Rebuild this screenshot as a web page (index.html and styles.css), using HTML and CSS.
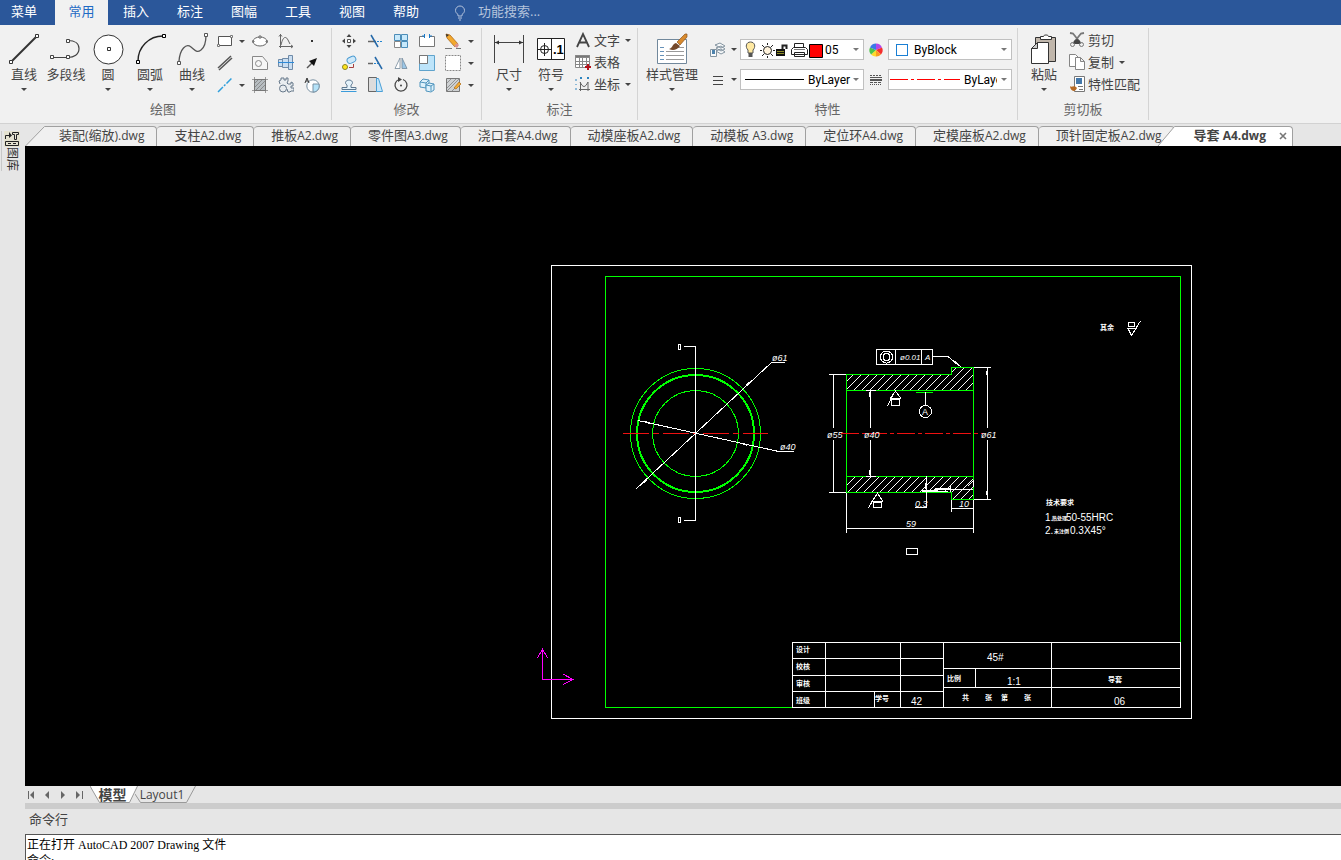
FILE: index.html
```
<!DOCTYPE html>
<html lang="zh-CN">

<head>
    <meta charset="UTF-8">
    <meta name="viewport" content="width=device-width, initial-scale=1.0">
    <title>导套 A4.dwg</title>
    <link rel="stylesheet" href="styles.css">
</head>

<body>
    <nav class="menu">
        <button class="first">菜单</button>
        <button class="active">常用</button>
        <button>插入</button>
        <button>标注</button>
        <button>图幅</button>
        <button>工具</button>
        <button>视图</button>
        <button>帮助</button>
        <label class="search">
            <svg width="12" height="16" viewBox="0 0 12 16" fill="none" stroke="#b4c3dc"><path d="M4 11V9.500C2.500 8.500 1.500 7 1.500 5.500a4.500 4.500 0 0 1 9 0c0 1.500-1 3-2.500 4V11zM4 13h4M5 15h2"/></svg>
            <input type="text" placeholder="功能搜索..." aria-label="功能搜索">
        </label>
    </nav>

    <div class="ribbon">
        <!-- 绘图 -->
        <section class="group draw">
            <div class="tools">
                <button class="big"><svg width="32" height="32" viewBox="0 0 32 32" fill="#fff" stroke="#333"><path d="M4 28 28 4" stroke-width="2"/><path d="M1.500 27.500h3v3h-3zM27.500 1.500h3v3h-3z"/></svg><span>直线</span><i class="caret"></i></button>
                <button class="big"><svg width="32" height="32" viewBox="0 0 32 32" fill="none" stroke="#444"><path d="M3 24.500h15c6 0 11-3 11-9 0-5-4-8-11-8" stroke-width="1.200"/><path fill="#fff" d="M.5 22.500h3v3h-3zM16.500 22.500h3v3h-3zM16.500 6.500h3v3h-3z"/></svg><span>多段线</span></button>
                <button class="big"><svg width="32" height="32" viewBox="0 0 32 32" fill="#fff" stroke="#333"><circle cx="16.500" cy="16.500" r="14.500"/><path d="M15.500 14.500h3v3h-3z"/></svg><span>圆</span><i class="caret"></i></button>
                <button class="big"><svg width="32" height="32" viewBox="0 0 32 32" fill="none" stroke="#222"><path d="M4 28C4 14 15 3 29 3" stroke-width="1.400"/><path fill="#fff" stroke="#000" d="M2.500 27.500h3v3h-3zM28.500 1.500h3v3h-3z"/></svg><span>圆弧</span><i class="caret"></i></button>
                <button class="big"><svg width="32" height="32" viewBox="0 0 32 32" fill="none" stroke="#555"><path d="M3 28c1-12 7-18 12-14s6 6 10 3 5-8 5-15" stroke-width="1.300"/><path fill="#fff" d="M1.500 28.500h3v3h-3zM28.500.5h3v3h-3z"/></svg><span>曲线</span><i class="caret"></i></button>
                <div class="small-grid">
                    <button aria-label="矩形"><svg width="16" height="16" viewBox="0 0 16 16" fill="#fff" stroke="#555"><path d="M1.500 3.500h13v9h-13z"/><path d="M.5 11.500h2v2h-2zM13.500 2.500h2v2h-2z" stroke="#777"/></svg></button>
                    <button class="drop" aria-label="矩形选项"><i class="caret"></i></button>
                    <button aria-label="椭圆"><svg width="16" height="16" viewBox="0 0 16 16" fill="#fff" stroke="#666"><ellipse cx="8" cy="8.500" rx="7" ry="4.500"/><path d="M7 3h2v2H7zM0 8h2v1H0zM14 8h2v1h-2z"/></svg></button>
                    <button aria-label="公式曲线"><svg width="16" height="16" viewBox="0 0 16 16" fill="none" stroke="#666"><path d="M2.500 1v14M1 13.500h14M1 3.500l1.500-2 1.500 2M13 12l2 1.500-2 1.500M3 12c2-9 5-9 7-5l2 4"/></svg></button>
                    <button aria-label="点"><svg width="16" height="16" viewBox="0 0 16 16"><path d="M7 7h2v2H7z" fill="#333"/></svg></button>

                    <button aria-label="平行线"><svg width="16" height="16" viewBox="0 0 16 16" fill="none" stroke="#555" stroke-width="1.500"><path d="M1 13 14 1M2 15 15 3"/></svg></button>
                    <span></span>
                    <button aria-label="多边形"><svg width="16" height="16" viewBox="0 0 16 16" fill="#f6f6f6" stroke="#888"><path d="M.5 1.500h10l5 6v7H.5z"/><circle cx="6.500" cy="8.500" r="3"/></svg></button>
                    <button aria-label="孔轴"><svg width="16" height="16" viewBox="0 0 16 16" fill="#c9def2" stroke="#6f8ba8"><path d="M.5 4.500h4v7h-4zM4.500 3.500h6v9h-6zM10.500.5h4v14h-4z"/><path d="M0 7.500h16" stroke="#2e8ad8"/></svg></button>
                    <button aria-label="箭头"><svg width="16" height="16" viewBox="0 0 16 16"><path d="m3 13 6-6" stroke="#555" stroke-width="1.500"/><path d="m13 3-3 8-5-5z" fill="#111"/></svg></button>

                    <button aria-label="中心线"><svg width="16" height="16" viewBox="0 0 16 16"><path d="M1 15 15 1" stroke="#2f9fdc" stroke-width="1.500" stroke-dasharray="7 1.500 2 1.500"/></svg></button>
                    <button class="drop" aria-label="中心线选项"><i class="caret"></i></button>
                    <button aria-label="剖面线"><svg width="16" height="16" viewBox="0 0 16 16" fill="#b7bdc1" stroke="#777"><path d="M2.500 2.500h11v11h-11z"/><path d="m3 6 3-3M3 10l7-7M4 13l9-9M8 13l5-5M0 2.500h16M2.500 0v16M13.500 0v16M0 13.500h16" stroke-width=".700"/></svg></button>
                    <button aria-label="齿轮"><svg width="16" height="16" viewBox="0 0 16 16" fill="#e9edf0" stroke="#66788a"><path d="M2 7 1 4l2-1V1h3v2h2V1h2v3L9 6l1 1h3V5l2 1v3h-2v2h3v3h-3l-1 1h-2l-1-3"/><circle cx="5" cy="11.500" r="3.500"/></svg></button>
                    <button aria-label="局部放大"><svg width="16" height="16" viewBox="0 0 16 16" fill="#fff" stroke="#7890a2"><circle cx="9" cy="9" r="6.200"/><path d="M9 7h6c1 5-2 8-6 8z" fill="#b4e2f8"/><path d="M1 6 3 1l2 5M2 4h2" fill="none" stroke="#333"/></svg></button>
                </div>
            </div>
            <h2>绘图</h2>
        </section>

        <!-- 修改 -->
        <section class="group modify">
            <div class="tools">
                <div class="small-grid">
                    <button aria-label="平移"><svg width="16" height="16" viewBox="0 0 16 16" fill="#444"><path d="m8 1 2.500 3h-5zM8 15l2.500-3h-5zM1 8l3-2.500v5zM15 8l-3-2.500v5z"/><path d="M6.500 6.500h3v3h-3z" fill="#fff" stroke="#555"/></svg></button>
                    <button aria-label="裁剪"><svg width="16" height="16" viewBox="0 0 16 16" fill="none" stroke="#666"><path d="M1 8.500h8" stroke-width="1.500"/><path d="M10 8.500h6" stroke="#2486d0" stroke-dasharray="2 1"/><path d="m4 2 7 12" stroke="#2468a8" stroke-width="1.500"/></svg></button>
                    <button aria-label="阵列"><svg width="16" height="16" viewBox="0 0 16 16" fill="#c8e9fb" stroke="#4c8db8"><path d="M1.500 1.500h6v6h-6zM8.500 1.500h6v6h-6zM8.500 8.500h6v6h-6z"/><path fill="#fff" stroke="#888" d="M1.500 8.500h6v6h-6z"/></svg></button>
                    <button aria-label="打断"><svg width="16" height="16" viewBox="0 0 16 16" fill="#fff" stroke="#777"><path d="M5 3.500H.5v10h15v-10H11"/><path d="M5.500 1v4M10.500 1v4M3 3h3M10 3h3" stroke="#1979c8"/></svg></button>
                    <button aria-label="删除"><svg width="16" height="16" viewBox="0 0 16 16"><path d="m1 1 1 4 8 9 3-3-8-9z" fill="#f3a92e" stroke="#b16a16" stroke-width=".800"/><path d="m9 13 3-3 2 2-2 3z" fill="#d99292"/><path d="m1 1 .5 3L4 2z" fill="#333"/><path d="M0 15.500h7M11 15.500h5" stroke="#777"/></svg></button>
                    <button class="drop" aria-label="删除选项"><i class="caret"></i></button>

                    <button aria-label="旋转复制"><svg width="16" height="16" viewBox="0 0 16 16" fill="#cfe9f9" stroke="#4b9bd2"><rect x="6" y="2" width="9" height="6" rx="3" transform="rotate(-25 10 5)"/><circle cx="4" cy="12" r="2.500" fill="#ffe51c" stroke="#8b8525"/><path d="M8 12.500h4.500V9" fill="none" stroke="#a54040"/></svg></button>
                    <button aria-label="延伸"><svg width="16" height="16" viewBox="0 0 16 16" fill="none" stroke="#666"><path d="M1 8.500h5" stroke-width="1.500"/><path d="M7 8.500h4" stroke="#2486d0" stroke-dasharray="2 1"/><path d="m8 2 7 12" stroke="#2468a8" stroke-width="1.500"/></svg></button>
                    <button aria-label="镜像"><svg width="16" height="16" viewBox="0 0 16 16" stroke="#73899a" stroke-width=".800"><path d="M7 3v10.500H2z" fill="#fff"/><path d="M9 3v10.500h5z" fill="#9bc6e6"/></svg></button>
                    <button aria-label="缩放"><svg width="16" height="16" viewBox="0 0 16 16" fill="#bde4fa" stroke="#5fa3cc"><path d="M.5.5h15v15H.5z"/><path d="M.5.5h8v8h-8z" fill="#fff" stroke="#777"/></svg></button>
                    <button aria-label="拉伸"><svg width="16" height="16" viewBox="0 0 16 16" fill="#fff"><path d="M.5.5h15v15H.5z" stroke="#888" stroke-dasharray="2 1"/></svg></button>
                    <button class="drop" aria-label="拉伸选项"><i class="caret"></i></button>

                    <button aria-label="等距线"><svg width="16" height="16" viewBox="0 0 16 16" fill="none" stroke="#5d7890"><path d="M1 10.500h5V8c-3-2-1-5 2-5s5 3 2 5v2.500h5v2H1z" fill="#e4f2fa"/><path d="M0 14.500h15.500" stroke="#3b9cdb"/></svg></button>
                    <button aria-label="拔模"><svg width="16" height="16" viewBox="0 0 16 16" fill="#dcdcdc" stroke="#666"><path d="M1.500.5h8v14h-8z"/><path d="M9.500 1.500h2l4 13h-6z" fill="#c5e6fa" stroke="#4a9fd6"/></svg></button>
                    <button aria-label="旋转"><svg width="16" height="16" viewBox="0 0 16 16" fill="none" stroke="#444" stroke-width="1.300"><path d="M10 2.500a6 6 0 1 1-4 0"/><path d="m5 0 4 2.500L5 5z" fill="#444" stroke="none"/><circle cx="8" cy="8.500" r="1" fill="#444" stroke="none"/></svg></button>
                    <button aria-label="块"><svg width="16" height="16" viewBox="0 0 16 16" fill="#def1fb" stroke="#4f94bd"><path d="m1 5 3-3 6 1v6l-3 2-6-1zM1 5l6 1v5M7 6l3-3"/><path d="m7 8 3-2 5 1v6l-3 2-5-1zM7 8l5 1v5M12 9l3-2"/></svg></button>
                    <button aria-label="编辑填充"><svg width="16" height="16" viewBox="0 0 16 16" fill="#ced1d3" stroke="#777"><path d="M1.500 1.500h13v13h-13z"/><path d="m2 6 4-4M2 11l9-9M2 14 14 2M7 14l7-7" stroke-width=".700"/><path d="m9 11 5-6 2 2-5 5z" fill="#f2ac36" stroke="#ad6a16" stroke-width=".700"/></svg></button>
                    <button class="drop" aria-label="填充选项"><i class="caret"></i></button>
                </div>
            </div>
            <h2>修改</h2>
        </section>

        <!-- 标注 -->
        <section class="group dims">
            <div class="tools">
                <button class="big"><svg width="32" height="32" viewBox="0 0 32 32" stroke="#444"><path d="M1.500 2v28M30.500 2v28M2 9.500h28" fill="none"/><path d="m2 9.500 4-2v4zM30 9.500l-4-2v4z" fill="#333" stroke="none"/></svg><span>尺寸</span><i class="caret"></i></button>
                <button class="big"><svg width="32" height="32" viewBox="0 0 32 32" fill="none" stroke="#222"><path d="M2.500 5.500h27v21h-27zM16.500 5v22" fill="#fff"/><circle cx="9.500" cy="16.500" r="4"/><path d="M3 16.500h13M9.500 10v13"/><text x="18" y="21" font-size="13" font-weight="bold" fill="#000" stroke="none">.1</text></svg><span>符号</span><i class="caret"></i></button>
                <div class="rows">
                    <button><svg width="16" height="16" viewBox="0 0 16 16"><path d="M2 15 8 2l6 13M4 10.500h8" fill="none" stroke="#444" stroke-width="1.800"/></svg>文字<i class="caret"></i></button>
                    <button><svg width="16" height="16" viewBox="0 0 16 16" fill="#fff" stroke="#888"><path d="M.5 1.500h14v12H.5zM.5 7.500h14M.5 10.500h14M4.500 2v11M7.500 2v11M11.500 2v11"/><path d="M.5 1.500h14v2H.5z" fill="#777"/><path d="M13 10v6M10 13h6" stroke="#b5121b" stroke-width="2"/></svg>表格</button>
                    <button><svg width="16" height="16" viewBox="0 0 16 16" fill="none" stroke="#666"><path d="M5.500 6v9M4 13.500h11M5 6c3 6 5 6 8 0v9"/><path d="M1 3v2M5 1l2 2M7 1 5 3M12 1l2 2M14 1l-2 2M1 8v1M1 12v2" stroke="#2c83bf"/></svg>坐标<i class="caret"></i></button>
                </div>
            </div>
            <h2>标注</h2>
        </section>

        <!-- 特性 -->
        <section class="group props">
            <div class="tools">
                <button class="big style"><svg width="32" height="32" viewBox="0 0 32 32"><path d="M1.500 6.500h29v24h-29z" fill="#fff" stroke="#71889c"/><path d="M4 14.500h4M4 18.500h4M4 22.500h4M4 26.500h4" stroke="#6691b8"/><path d="M10 18.500h18M10 22.500h18M10 26.500h18M22 14.500h6" stroke="#999"/><path d="M13 16c4-1 3-5 7-6l4 3c-3 4-7 5-11 3z" fill="#74492b"/><path d="m21 9 8-8h2v3l-7 8z" fill="#d88a2d" stroke="#8b5420" stroke-width=".700"/></svg><span>样式管理</span><i class="caret"></i></button>
                <div class="prop-grid">
                    <button aria-label="图层"><svg width="16" height="16" viewBox="0 0 16 16" fill="#f8fafb" stroke="#8494a0"><path d="m5 3 5-2 5 3-4 2zM6 6l5-2 4 3-4 2zM6 9l5-2 4 3-4 2z"/><path d="M.5 7.500h6v7h-6z"/><path d="M2 8h3v4H2z" fill="#4e83ad" stroke="none"/></svg></button>
                    <button class="drop" aria-label="图层选项"><i class="caret"></i></button>
                    <div class="combo layer">
                        <svg width="81" height="18" viewBox="0 0 81 18">
                            <path d="M4 12V9C1 6 2 1 6.500 1S12 6 9 9v3z" fill="#ffe9a2" stroke="#555"/><path d="M4.500 12h4v4h-4z" fill="#555"/>
                            <circle cx="23.500" cy="9.500" r="4" fill="#fff3dc" stroke="#222"/><path d="M23.500 2v2M23.500 15v2M16 9.500h2M29 9.500h2M18 4l2 2M27 13l2 2M18 15l2-2M27 6l2-2" stroke="#222"/>
                            <path d="M32 8h9v7h-9z" fill="#111"/><path d="M33 10.500h7M33 12.500h7" stroke="#8e8d27"/><path d="M38.500 8V4.500h4V8" fill="none" stroke="#222" stroke-width="2"/>
                            <path d="M50.500 7V2.500h9V7M49.500 6.500h12l2 2v5h-16v-5zM50.500 11.500h10v4h-10z" fill="#fff" stroke="#222"/><path d="M50 8.500h11" stroke="#777"/>
                            <path d="M65.500 3.500h13v13h-13z" fill="#f00" stroke="#000"/>
                        </svg>
                        <select aria-label="图层"><option>05</option></select>
                        <i class="caret"></i>
                    </div>
                    <button aria-label="颜色"><svg width="16" height="16" viewBox="0 0 16 16"><path d="M8 8V1.500A6.500 6.500 0 0 1 14 5.500z" fill="#b347e8"/><path d="m8 8 6-2.500a6.500 6.500 0 0 1-1 7z" fill="#f52e2e"/><path d="m8 8 5 4.500a6.500 6.500 0 0 1-5 2z" fill="#f99c22"/><path d="M8 8v6.500a6.500 6.500 0 0 1-5-2z" fill="#ffd92a"/><path d="m8 8-5 4.500a6.500 6.500 0 0 1-1-7z" fill="#4cc34a"/><path d="M8 8 2 5.500a6.500 6.500 0 0 1 6-4z" fill="#3a78e8"/></svg></button>
                    <div class="combo color"><i class="swatch"></i><select aria-label="颜色"><option>ByBlock</option></select><i class="caret"></i></div>

                    <button aria-label="线型"><svg width="16" height="16" viewBox="0 0 16 16" stroke="#444" shape-rendering="crispEdges"><path d="M3 4.500h10M3 8.500h10M3 12.500h10"/></svg></button>
                    <button class="drop" aria-label="线型选项"><i class="caret"></i></button>
                    <div class="combo"><svg width="59" height="9" viewBox="0 0 59 9"><path d="M0 4.500h59" stroke="#000"/></svg><select aria-label="线宽"><option>ByLayer</option></select><i class="caret"></i></div>
                    <button aria-label="线型表"><svg width="16" height="16" viewBox="0 0 16 16" stroke="#555"><path d="M2 3.500h12" stroke-dasharray="2 1"/><path d="M2 5.500h12"/><path d="M2 8h12" stroke-width="2"/><path d="M2 10.500h12" stroke-dasharray="3 1"/><path d="M2 12.500h12" stroke-dasharray="1 1"/></svg></button>
                    <div class="combo linetype"><svg width="70" height="9" viewBox="0 0 70 9"><path d="M0 4.500h70" stroke="#f00" stroke-dasharray="18 3 3 3"/></svg><select aria-label="线型"><option>ByLayer</option></select><i class="caret"></i></div>
                </div>
            </div>
            <h2>特性</h2>
        </section>

        <!-- 剪切板 -->
        <section class="group clip">
            <div class="tools">
                <button class="big"><svg width="32" height="32" viewBox="0 0 32 32" stroke="#333"><path d="M7.500 4.500h20v24h-20z" fill="#c0b6ab"/><path d="M12.500 6.500v-3h3c0-2 5-2 5 0h3v3z" fill="#fff"/><path d="M9.500 9.500h11v21h-17v-15z" fill="#fff"/><path d="M9.500 9.500v6h-6z" fill="#ccc"/></svg><span>粘贴</span><i class="caret"></i></button>
                <div class="rows">
                    <button><svg width="16" height="16" viewBox="0 0 16 16" fill="none" stroke="#777"><path d="m1 1 3 .5 8 10M15 1l-3 .5-8 10" stroke-width="1.800"/><path d="m5 9 3-2 3 2v3H5z" fill="#444" stroke="none"/><circle cx="3.500" cy="12.500" r="2" /><circle cx="12.500" cy="12.500" r="2"/></svg>剪切</button>
                    <button><svg width="16" height="16" viewBox="0 0 16 16" fill="#fff" stroke="#858585"><path d="M.5.5h6l3 3v9h-9z"/><path d="M6.500 3.500h5l4 4v8h-9zM11.500 3.500v4h4"/></svg>复制<i class="caret"></i></button>
                    <button><svg width="16" height="16" viewBox="0 0 16 16" fill="#fff" stroke="#777"><path d="M5.500.5h10v15h-10z"/><path d="M7 2h6v6H7z" fill="#4478aa" stroke="none"/><path d="M9 10.500h5M10 13.500h4"/><path d="M1 10c1 2 4-1 6 1l1 1c-2 5-7 3-7-2z" fill="#b66a24" stroke="none"/></svg>特性匹配</button>
                </div>
            </div>
            <h2>剪切板</h2>
        </section>
    </div>

    <div class="work">
        <aside class="dock">
            <button>
                <svg width="16" height="16" viewBox="0 0 16 16" fill="none" stroke="#222"><path d="M0 0h16v16H0z" fill="#e5e2cf" stroke="none"/><path d="M1.500 8V4.500H6"/><path d="m5 1 3 3.500L5 7z" fill="#222" stroke="none"/><path d="M8.500 1.500h6v2h-2v5h-2v-5h-2zM1.500 10.500h13v4h-13zM4 12.500h3M9 12.500h3"/></svg>
                <span>图库</span>
            </button>
        </aside>

        <main>
            <div class="tabs">
                <button class="tab lead">
                    <svg width="21" height="20" viewBox="0 0 21 20"><path d="M.5 20 19.500.5H21V20z" fill="#f0f0f0"/><path d="M.5 20 19.500.5H21" fill="none" stroke="#a0a0a0"/></svg>
                    装配<small>(</small>缩放<small>).dwg</small></button>
                <button class="tab">支柱<small>A2.dwg</small></button>
                <button class="tab">推板<small>A2.dwg</small></button>
                <button class="tab">零件图<small>A3.dwg</small></button>
                <button class="tab">浇口套<small>A4.dwg</small></button>
                <button class="tab">动模座板<small>A2.dwg</small></button>
                <button class="tab">动模板<small> A3.dwg</small></button>
                <button class="tab">定位环<small>A4.dwg</small></button>
                <button class="tab">定模座板<small>A2.dwg</small></button>
                <button class="tab">顶针固定板<small>A2.dwg</small></button>
                <button class="tab current">
                    <svg width="21" height="20" viewBox="0 0 21 20"><path d="M3 20 19.500.5H21V20z" fill="#fff"/><path d="M3 20 19.500.5H21" fill="none" stroke="#a0a0a0"/></svg>
                    导套<small> A4.dwg</small>
                    <svg class="close" width="8" height="8" viewBox="0 0 8 8"><path d="m1 1 6 6M7 1 1 7" stroke="#777" stroke-width="1.600"/></svg>
                </button>
            </div>

            <svg class="canvas" viewBox="25 146 1316 640" fill="none" stroke="#fff" shape-rendering="crispEdges">
                <defs>
                    <pattern id="hatch" width="8" height="8" patternUnits="userSpaceOnUse" x="846" y="390">
                        <path d="M-1 9 9-1M-1 1l2-2M7 9l2-2"/>
                    </pattern>
                </defs>

                <!-- 图框 -->
                <path d="M551.5 265.500h640v453h-640z"/>
                <path class="green" d="M792.500 707.500h-187v-431h575v366"/>

                <!-- 左视图 -->
                <g class="green">
                    <circle cx="695.500" cy="433.500" r="65"/>
                    <circle cx="695.500" cy="433.500" r="58.500" stroke-width="2"/>
                    <circle cx="695.500" cy="433.500" r="43"/>
                </g>
                <path class="red" d="M623 433.500h145" stroke-dasharray="26 4 6 4"/>
                <path d="M684 346.500h11.500v174H684"/>
                <path d="M636.500 488.500 771.500 362.500H785M638 420.500l138.500 30.500H794"/>
                <path class="solid" d="m640 486 7-5-2-2zM744 386l5-5 1 2zM637 420l13 2v2zM738 443l9 1v2z"/>
                <path d="M678.500 344.500h2v5h-2zM678.500 517.500h2v5h-2z"/>
                <text class="dim" x="772" y="361">ø61</text>
                <text class="dim" x="780" y="450">ø40</text>

                <!-- 主视图剖面 -->
                <path d="M846.500 390.500v-16h105v-7h22v23z" fill="url(#hatch)" stroke="none"/>
                <path d="M846.500 476.500h127v23h-22v-7h-105z" fill="url(#hatch)" stroke="none"/>
                <path class="green" d="M846.500 374.500h105v-7h22v132h-22v-7h-105zM846.500 390.500h127M846.500 476.500h127M916 392.500h17"/>
                <path class="red" d="M841 433.500h142" stroke-dasharray="18 3 4 3"/>

                <path d="M829 374.500h17M829 492.500h17M833.500 374v54M833.500 440v52"/>
                <path d="M866 390.500h10M866 476.500h10M870.500 390v38M870.500 440v36"/>
                <path d="M974 367.500h17M974 499.500h17M987.500 367v61M987.500 440v59"/>
                <path d="M846.500 493v40M973.500 500v33M846.500 528.500h127M951.500 500v12M951.500 508.500h22"/>
                <path d="M926.500 476v31.500H915M922 491.500h26M934 489.500h39M950.500 485v7M935 488.500h15M968 486l5-5v6"/>
                <path d="M869.500 392v5M869.500 470v5M986.500 371v4M986.500 491v4M925.500 483v6M922 490.500h16"/>
                <text class="dim" x="827" y="438">ø55</text>
                <text class="dim" x="864" y="438">ø40</text>
                <text class="dim" x="981" y="438">ø61</text>
                <text class="dim" x="906" y="527">59</text>
                <text class="dim" x="959" y="507">10</text>
                <text class="dim" x="915" y="507">0.3</text>

                <!-- 粗糙度、基准、形位公差 -->
                <path d="m895.500 391-5 7h10zM891.500 399.500h8v6h-8zM887.500 406l7-14"/>
                <path d="m877.500 493-5 8h10zM873.500 502.500h8v5h-8zM868.500 508l6-11"/>
                <path d="M925.500 392v13"/>
                <circle cx="925.500" cy="411.500" r="6"/>
                <text class="dim upright" x="922" y="415">A</text>
                <path d="M876.500 349.500h56v15h-56zM895.500 349v15M921.500 349v15M932 356.500h16l13 10.500"/>
                <circle cx="886.500" cy="357" r="6"/>
                <circle cx="886.500" cy="357" r="3.500"/>
                <text class="dim frame" x="900" y="360">ø0.01</text>
                <text class="dim frame" x="925" y="360">A</text>
                <path class="solid" d="m961 367-7-4 1-2z"/>
                <path d="M906.500 548.500h11v6h-11z"/>

                <!-- 技术要求 -->
                <text class="cn" x="1100" y="330">其余</text>
                <path d="M1128.500 322.500h6v4h-6zM1127 328.500h9l-4.500 7-3.500-7M1136 328l4.500-7"/>
                <text class="cn" x="1046" y="505">技术要求</text>
                <text class="note" x="1045" y="521">1.</text>
                <text class="cn tiny" x="1052" y="520">热处理</text>
                <text class="note" x="1066" y="521">50-55HRC</text>
                <text class="note" x="1045" y="534">2.</text>
                <text class="cn tiny" x="1054" y="533">未注倒</text>
                <text class="note" x="1070" y="534">0.3X45°</text>

                <!-- 标题栏 -->
                <path d="M792.500 642.500h388v65h-388zM825.500 642v65M900.500 642v65M943.500 642v65M1051.500 642v65M792 658.500h151M792 675.500h151M792 691.500h151M874.500 691v16M943 668.500h237M943 687.500h237M975.500 668v19"/>
                <text class="cn" x="796" y="652">设计</text>
                <text class="cn" x="796" y="669">校核</text>
                <text class="cn" x="796" y="686">审核</text>
                <text class="cn" x="796" y="703">班级</text>
                <text class="cn" x="875" y="701">学号</text>
                <text class="cn" x="947" y="681">比例</text>
                <text class="cn" x="1108" y="682">导套</text>
                <text class="cn" x="962" y="700">共</text>
                <text class="cn" x="985" y="700">张</text>
                <text class="cn" x="1001" y="700">第</text>
                <text class="cn" x="1024" y="700">张</text>
                <text class="note" x="911" y="705">42</text>
                <text class="note" x="987" y="661">45#</text>
                <text class="note" x="1007" y="685">1:1</text>
                <text class="note" x="1114" y="705">06</text>

                <!-- 坐标系 -->
                <path class="ucs" d="M542.500 649v30.500H573M537.500 658l5-9 5 9M563 674l10 5.500-10 5"/>
            </svg>

            <div class="sheets">
                <button class="nav" aria-label="首页"><svg width="8" height="8" viewBox="0 0 8 8"><path d="M1.500 0v8" stroke="#666"/><path d="M7 0v8L3 4z" fill="#666"/></svg></button>
                <button class="nav" aria-label="上一页"><svg width="8" height="8" viewBox="0 0 8 8"><path d="M6 0v8L2 4z" fill="#666"/></svg></button>
                <button class="nav" aria-label="下一页"><svg width="8" height="8" viewBox="0 0 8 8"><path d="M2 0v8l4-4z" fill="#666"/></svg></button>
                <button class="nav" aria-label="末页"><svg width="8" height="8" viewBox="0 0 8 8"><path d="M7.500 0v8" stroke="#666"/><path d="M1 0v8l4-4z" fill="#666"/></svg></button>
                <button class="sheet model"><svg width="48" height="17" viewBox="0 0 48 17"><path d="m0 0 9.500 16.500h30L47.500 0" fill="#fff" stroke="#999"/></svg><span>模型</span></button>
                <button class="sheet"><svg width="62" height="17" viewBox="0 0 62 17"><path d="m0 8 5.500 8.500h46L60.500 0" fill="none" stroke="#999"/></svg><span>Layout1</span></button>
            </div>

            <label class="cmd-title" for="cmd">命令行</label>
            <textarea id="cmd" class="cmd" readonly>正在打开 AutoCAD 2007 Drawing 文件
命令:</textarea>
        </main>
    </div>
</body>

</html>
```

FILE: styles.css
```
* {
    box-sizing: border-box;
}

body {
    margin: 0;
    height: 100vh;
    display: flex;
    flex-direction: column;
    overflow: hidden;
    background: #e6e6e6;
    color: #444;
    font: 13px/16px "Open Sans", "Noto Sans CJK SC", sans-serif;
}

button,
select,
input {
    border: 0;
    padding: 0;
    margin: 0;
    background: none;
    color: inherit;
    font: inherit;
}

svg {
    flex: none;
}

.caret {
    flex: none;
    width: 0;
    border: 3px solid transparent;
    border-top-color: #444;
    border-bottom: 0;
}

/* 菜单栏 */
.menu {
    display: flex;
    height: 25px;
    background: #2b579a;
    color: #fff;
}

.menu button {
    width: 54px;
    padding-bottom: 4px;
}

.menu .first {
    width: 55px;
    padding-right: 7px;
}

.menu .active {
    width: 53px;
    margin-right: 1px;
    background: #f1f1f1;
    color: #1f6ac4;
}

.search {
    display: flex;
    align-items: center;
    gap: 12px;
    margin-left: 21px;
}

.search input {
    width: 120px;
    height: 23px;
    padding-bottom: 4px;
}

.search input::placeholder {
    color: #b4c3dc;
}

/* 功能区 */
.ribbon {
    display: flex;
    height: 99px;
    background: #f1f1f1;
    border-bottom: 1px solid #d2d2d2;
    padding-top: 3px;
}

.group {
    display: flex;
    flex-direction: column;
    height: 92px;
    border-right: 1px solid #d4d4d4;
}

.group h2 {
    margin: 3px 0 0;
    text-align: center;
    font-size: 13px;
    font-weight: normal;
    color: #666;
}

.tools {
    display: flex;
    height: 70px;
}

.big {
    display: flex;
    flex-direction: column;
    align-items: center;
    width: 42px;
    padding-top: 5px;
    white-space: nowrap;
}

.big span {
    margin: 1px 0 6px;
}

.big text {
    font-family: "Liberation Sans", sans-serif;
}

.small-grid {
    display: grid;
    grid-auto-rows: 22px;
    padding-top: 2px;
}

.small-grid button,
.prop-grid button {
    display: flex;
    align-items: center;
    justify-content: center;
}

.rows {
    display: flex;
    flex-direction: column;
    padding-top: 1px;
}

.rows button {
    display: flex;
    align-items: center;
    gap: 3px;
    height: 22px;
}

.rows .caret {
    margin-left: 2px;
}

.draw {
    width: 332px;
}

.draw .tools {
    padding-left: 3px;
}

.draw h2 {
    padding-right: 5px;
}

.draw .small-grid {
    grid-template-columns: 24px 10px 26px 26px 26px;
}

.modify {
    width: 150px;
}

.modify .tools {
    padding-left: 4px;
}

.modify .small-grid {
    grid-template-columns: repeat(5, 26px) 10px;
}

.dims {
    width: 156px;
}

.dims .tools {
    padding-left: 6px;
}

.dims .rows {
    padding-left: 3px;
}

.props {
    width: 380px;
}

.props .tools {
    padding-left: 4px;
}

.style {
    width: 60px;
}

.clip {
    width: 131px;
}

.clip .tools {
    padding-left: 5px;
}

.clip .rows {
    padding-left: 4px;
}

.prop-grid {
    display: grid;
    grid-template-columns: 20px 12px 124px 24px 124px;
    grid-auto-rows: 21px;
    row-gap: 9px;
    padding: 11px 0 0 6px;
}

.combo {
    display: flex;
    align-items: center;
    min-width: 0;
    padding: 0 4px;
    background: #fff;
    border: 1px solid #c0c0c0;
    color: #000;
    font: 12px/16px Roboto, sans-serif;
}

.combo select {
    flex: 1;
    min-width: 0;
    height: 18px;
    padding-left: 4px;
    appearance: none;
}

.combo .caret {
    border-top-color: #777;
}

.layer {
    padding-left: 3px;
}

.layer select {
    padding-left: 0;
}

.color {
    padding-left: 7px;
}

.color select {
    padding-left: 6px;
}

.linetype {
    padding-left: 1px;
}

.linetype .caret {
    margin-left: 4px;
}

.swatch {
    width: 12px;
    height: 12px;
    border: 1px solid #1a7fd4;
}

/* 工作区 */
.work {
    flex: 1;
    min-height: 0;
    display: flex;
}

.dock {
    width: 25px;
    padding: 7px 0 0 1px;
}

.dock button {
    display: flex;
    flex-direction: column;
    align-items: center;
    width: 21px;
    border-left: 1px solid #c8c8c8;
    color: #333;
}

.dock span {
    writing-mode: vertical-rl;
    text-orientation: sideways;
    font-size: 12px;
    line-height: 14px;
}

main {
    flex: 1;
    min-width: 0;
    display: flex;
    flex-direction: column;
}

.tabs {
    display: flex;
    height: 22px;
    padding-top: 2px;
}

.tab {
    position: relative;
    flex: none;
    height: 20px;
    padding: 0 12px 2px 17px;
    background: #f0f0f0;
    border: solid #a0a0a0;
    border-width: 1px 1px 0 0;
    border-radius: 4px 4px 0 0;
    white-space: nowrap;
}

.tab small {
    font-size: 12px;
    white-space: pre;
}

.lead {
    margin-left: 20px;
    padding-left: 14px;
    border-radius: 0 4px 0 0;
}

.tab svg:first-child {
    position: absolute;
    left: -20px;
    top: -1px;
}

.current {
    padding: 0 5px 2px 19px;
    background: #fff;
    border-left: 0;
    border-radius: 0 4px 0 0;
    font-weight: bold;
}

.tab .close {
    margin-left: 10px;
}

.canvas {
    flex: 1;
    min-height: 0;
    width: 100%;
    background: #000;
}

.green {
    stroke: #0f0;
}

.red {
    stroke: #e11;
}

.ucs {
    stroke: #f0f;
}

.solid {
    fill: #fff;
    stroke: none;
}

.canvas text {
    fill: #fff;
    stroke: none;
}

.dim {
    font: italic 9px "Liberation Sans", sans-serif;
}

.frame {
    font-size: 8px;
}

.upright {
    font-style: normal;
}

.note {
    font: 10px "Liberation Sans", sans-serif;
}

.cn {
    font: bold 7px "Noto Sans CJK SC", sans-serif;
}

.tiny {
    font-size: 5px;
}

/* 布局标签 */
.sheets {
    display: flex;
    height: 23px;
    border-bottom: 6px solid #ccc;
}

.nav {
    display: flex;
    align-items: center;
    justify-content: center;
    width: 16px;
}

.nav:first-child {
    margin-left: -2px;
}

.sheet {
    position: relative;
    height: 17px;
    width: 54px;
}

.sheet svg {
    position: absolute;
    left: 0;
    top: 0;
}

.sheet span {
    position: relative;
    line-height: 15px;
    font-size: 12px;
    display: block;
}

.model {
    width: 45px;
    margin-left: 3px;
}

.model span {
    font-size: 14px;
    font-weight: bold;
}

.cmd-title {
    height: 25px;
    padding: 2px 4px 0;
}

.cmd {
    height: 26px;
    margin: 0;
    padding: 2px 1px 0;
    border: solid #555;
    border-width: 1px 0 0 1px;
    background: #fff;
    color: #000;
    font: 12px/16px "Liberation Serif", "Noto Sans CJK SC", serif;
    outline: 0;
    resize: none;
    overflow: hidden;
}
```
